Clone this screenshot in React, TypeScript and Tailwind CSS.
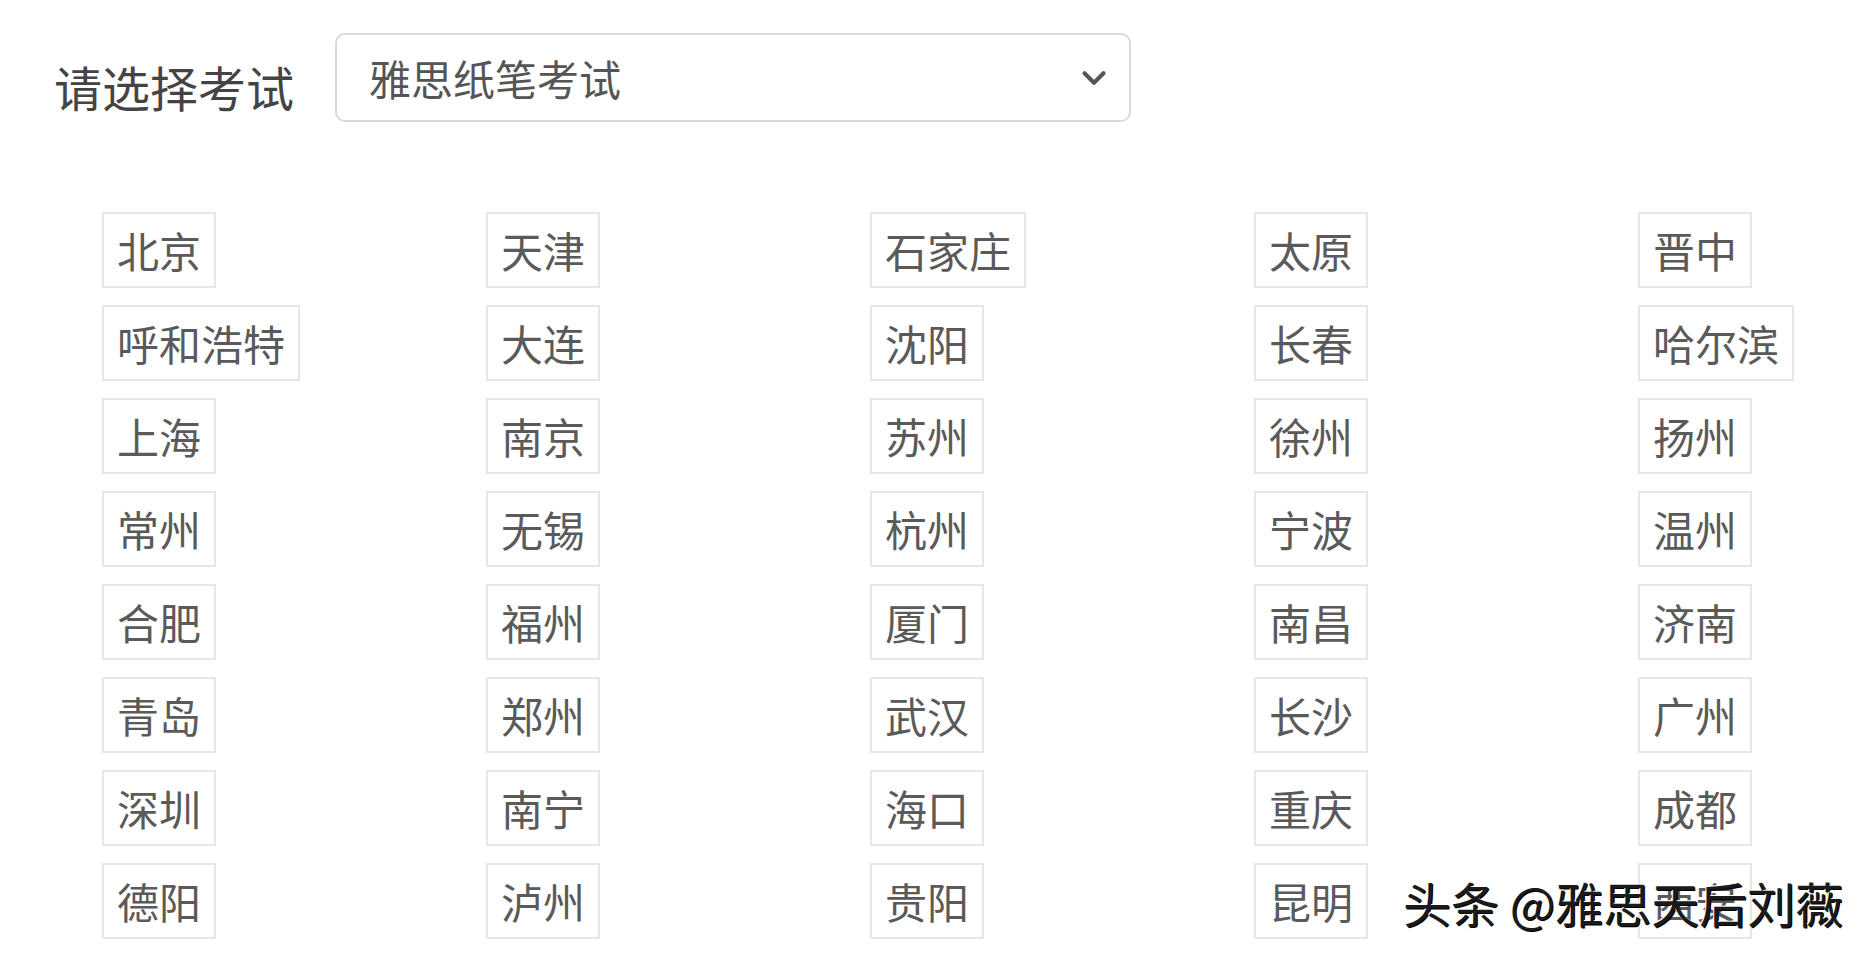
// @ts-nocheck
import { ChevronDown } from "lucide-react";

// City rows, in the order they appear on the page
const cities = [
  ["北京", "天津", "石家庄", "太原", "晋中"],
  ["呼和浩特", "大连", "沈阳", "长春", "哈尔滨"],
  ["上海", "南京", "苏州", "徐州", "扬州"],
  ["常州", "无锡", "杭州", "宁波", "温州"],
  ["合肥", "福州", "厦门", "南昌", "济南"],
  ["青岛", "郑州", "武汉", "长沙", "广州"],
  ["深圳", "南宁", "海口", "重庆", "成都"],
  ["德阳", "泸州", "贵阳", "昆明", "西安"],
];

const App = () => {
  return (
    <div
      className="relative w-[1870px] h-[954px] overflow-hidden bg-white text-[#555]"
      style={{ fontFamily: '"Noto Sans CJK SC", "Noto Sans", sans-serif' }}
    >
      {/* Exam picker */}
      <div className="flex items-center pt-[33px] pl-[54px]">
        <span className="w-[281px] mt-[17px] text-[48px] leading-none text-[#444]">请选择考试</span>
        <div className="flex items-center justify-between w-[796px] h-[89px] pl-[32px] pr-[16px] border-2 border-[#d9d9d9] rounded-[10px]">
          <span className="text-[42px] leading-none">雅思纸笔考试</span>
          <ChevronDown className="w-[38px] h-[38px] text-[#555]" strokeWidth={2.6} />
        </div>
      </div>

      {/* City list */}
      <div className="grid grid-cols-[repeat(5,384px)] gap-y-[17px] pl-[102px] pt-[90px]">
        {cities.flat().map((city, i) => (
          <div key={i}>
            <span className="inline-flex items-center h-[76px] px-[13px] border-2 border-[#e6e6e6] text-[42px] leading-none text-[#5a5a5a]">
              {city}
            </span>
          </div>
        ))}
      </div>

      {/* Watermark */}
      <div className="absolute left-[1403px] top-[878px] text-[48px] leading-none text-[#1a1a1a] [text-shadow:-1px_-1px_0_#fff,1px_1px_0_#000]">
        头条 @雅思天后刘薇
      </div>
    </div>
  );
};

export default App;
